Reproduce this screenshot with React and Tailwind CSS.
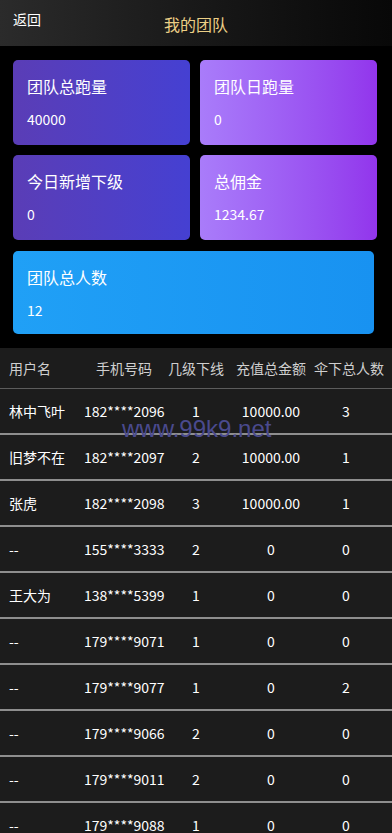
import React from 'react';

const cards = [
  { label: '团队总跑量', value: '40000', tone: 'bg-gradient-to-r from-[#5a3db6] to-[#4540d2]' },
  { label: '团队日跑量', value: '0', tone: 'bg-gradient-to-r from-[#a97cfa] to-[#9235ec]' },
  { label: '今日新增下级', value: '0', tone: 'bg-gradient-to-r from-[#5a3db6] to-[#4540d2]' },
  { label: '总佣金', value: '1234.67', tone: 'bg-gradient-to-r from-[#a97cfa] to-[#9235ec]' },
];

const rows = [
  ['林中飞叶', '182****2096', '1', '10000.00', '3'],
  ['旧梦不在', '182****2097', '2', '10000.00', '1'],
  ['张虎', '182****2098', '3', '10000.00', '1'],
  ['--', '155****3333', '2', '0', '0'],
  ['王大为', '138****5399', '1', '0', '0'],
  ['--', '179****9071', '1', '0', '0'],
  ['--', '179****9077', '1', '0', '2'],
  ['--', '179****9066', '2', '0', '0'],
  ['--', '179****9011', '2', '0', '0'],
  ['--', '179****9088', '1', '0', '0'],
];

const cols = 'grid grid-cols-[84px_80px_64px_86px_64px]';

function StatCard({ label, value, tone, className = '' }) {
  return (
    <div className={`h-[85px] rounded-[5px] pl-[14px] pt-[15px] text-white ${tone} ${className}`}>
      <div className="text-[16px] leading-[22px]">{label}</div>
      <div className="mt-[12px] text-[14px] leading-[20px]">{value}</div>
    </div>
  );
}

export default function App() {
  return (
    <div
      className="min-h-[833px] w-[392px] overflow-hidden bg-black"
      style={{ fontFamily: '"Noto Sans CJK SC", "Noto Sans", sans-serif' }}
    >
      <header className="relative h-[46px] bg-gradient-to-r from-[#2b2b2b] to-[#080808]">
        <button type="button" className="absolute left-[13px] top-[9px] text-[14px] leading-[20px] text-white">
          返回
        </button>
        <h1 className="pt-[12px] text-center text-[16px] leading-[24px] text-[#eccf86]">我的团队</h1>
      </header>

      <section className="px-[13px] pt-[14px]">
        <div className="grid w-[364px] grid-cols-2 gap-[10px]">
          {cards.map((c) => (
            <StatCard key={c.label} {...c} />
          ))}
        </div>
        <StatCard
          label="团队总人数"
          value="12"
          tone="bg-gradient-to-r from-[#20a0f6] to-[#1892f1]"
          className="mt-[11px] w-[361px] !h-[83px]"
        />
      </section>

      <section className="relative mt-[14px] bg-[#1c1c1c]">
        <div className={`${cols} h-[41px] items-center border-b border-[#5c5c5c] text-[14px] text-[#cfcfcf]`}>
          <div className="pl-[9px]">用户名</div>
          <div className="text-center whitespace-nowrap">手机号码</div>
          <div className="text-center whitespace-nowrap">几级下线</div>
          <div className="text-center whitespace-nowrap">充值总金额</div>
          <div className="text-center whitespace-nowrap">伞下总人数</div>
        </div>
        {rows.map((r, i) => (
          <div key={i} className={`${cols} h-[46px] items-center border-b-2 border-[#8e8e8e] text-[14px] text-white`}>
            <div className="pl-[9px] whitespace-nowrap">{r[0]}</div>
            <div className="text-center">{r[1]}</div>
            <div className="text-center">{r[2]}</div>
            <div className="text-center">{r[3]}</div>
            <div className="text-center">{r[4]}</div>
          </div>
        ))}
        {/* watermark */}
        <div
          className="pointer-events-none absolute left-[122px] top-[67px] text-[24px] leading-[28px] text-[#4a4a8e]"
          style={{ fontFamily: '"Liberation Sans", Arial, sans-serif' }}
        >
          www.99k9.net
        </div>
      </section>
    </div>
  );
}
